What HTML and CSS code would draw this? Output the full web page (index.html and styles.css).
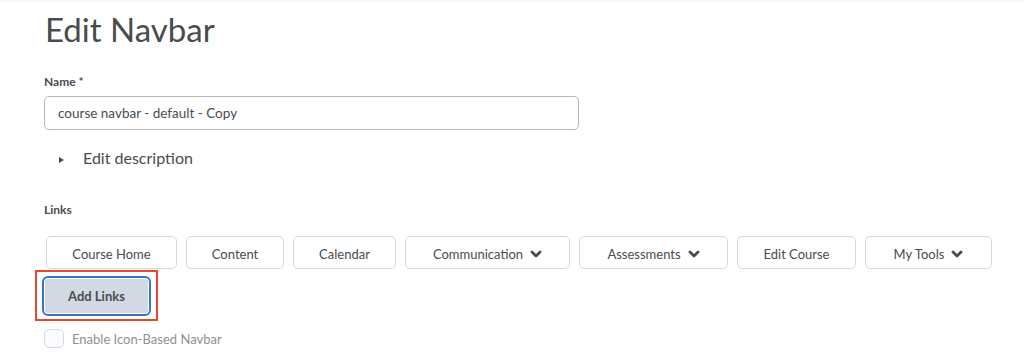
FILE: index.html
```html
<!DOCTYPE html>
<html lang="en">
<head>
    <meta charset="UTF-8">
    <title>Edit Navbar</title>
    <link rel="stylesheet" href="styles.css">
</head>
<body>
    <div class="topband"></div>
    <div class="page">
        <h1>Edit Navbar</h1>

        <label class="field-label" for="name">Name *</label>
        <input id="name" class="text-input" type="text" value="course navbar - default - Copy">

        <div class="desc-toggle">
            <span class="tri"></span>
            <span>Edit description</span>
        </div>

        <div class="field-label links-label">Links</div>

        <div class="links-row">
            <button class="link-btn w-home">Course Home</button>
            <button class="link-btn w-content">Content</button>
            <button class="link-btn w-cal">Calendar</button>
            <button class="link-btn w-comm">Communication <svg class="chev" viewBox="0 0 12 8"><path d="M2 2 6 6l4-4"/></svg></button>
            <button class="link-btn w-assess">Assessments <svg class="chev" viewBox="0 0 12 8"><path d="M2 2 6 6l4-4"/></svg></button>
            <button class="link-btn w-edit">Edit Course</button>
            <button class="link-btn w-tools">My Tools <svg class="chev" viewBox="0 0 12 8"><path d="M2 2 6 6l4-4"/></svg></button>
        </div>

        <div class="highlight">
            <button class="add-btn">Add Links</button>
        </div>

        <label class="check-row">
            <span class="checkbox"></span>
            <span>Enable Icon-Based Navbar</span>
        </label>
    </div>
</body>
</html>
```

FILE: styles.css
```css
body {
    margin: 0;
    background-color: #ffffff;
    font-family: Lato, "Open Sans", sans-serif;
    color: #494c4e;
}
.topband {
    height: 3px;
    background-color: #f9f9f9;
}
.page {
    padding-left: 44px;
}
h1 {
    margin: 6px 0 0 1px;
    font-size: 33px;
    font-weight: 400;
    line-height: 40px;
    color: #494c4e;
}
.field-label {
    display: block;
    margin-top: 24px;
    font-size: 12px;
    font-weight: 700;
    line-height: 18px;
}
.text-input {
    display: block;
    box-sizing: border-box;
    width: 535px;
    height: 34px;
    margin-top: 5px;
    padding: 0 13px;
    border: 1px solid #b3b6ba;
    border-radius: 5px;
    font-family: Lato, sans-serif;
    font-size: 13.5px;
    color: #494c4e;
}
.desc-toggle {
    display: flex;
    align-items: center;
    margin-top: 16px;
    height: 22px;
    font-size: 16px;
}
.tri {
    width: 0;
    height: 0;
    margin: 6px 19px 0 15px;
    border-top: 3.5px solid transparent;
    border-bottom: 3.5px solid transparent;
    border-left: 5px solid #494c4e;
}
.links-label {
    margin-top: 33px;
}
.links-row {
    display: flex;
    gap: 9px;
    margin-top: 17px;
    margin-left: 2px;
}
.link-btn {
    display: flex;
    align-items: center;
    justify-content: center;
    gap: 7px;
    box-sizing: border-box;
    height: 33px;
    padding: 2px 0 0;
    background-color: #ffffff;
    border: 1px solid #d3d9e3;
    border-radius: 5px;
    font-family: Lato, sans-serif;
    font-size: 13px;
    color: #494c4e;
}
.w-home { width: 131px; }
.w-content { width: 98px; }
.w-cal { width: 103px; }
.w-comm { width: 165px; }
.w-assess { width: 149px; }
.w-edit { width: 119px; }
.w-tools { width: 127px; }
.chev {
    width: 12px;
    height: 8px;
    fill: none;
    stroke: #494c4e;
    stroke-width: 2.8;
    stroke-linecap: round;
    stroke-linejoin: round;
}
.highlight {
    display: inline-block;
    margin: 1px 0 0 -9px;
    padding: 4px 5px 3px 5px;
    border: 2px solid #e8472d;
}
.add-btn {
    display: block;
    box-sizing: border-box;
    width: 109px;
    height: 40px;
    background-color: #d3d9e3;
    border: 2px solid #2f78c4;
    border-radius: 6px;
    box-shadow: inset 0 0 0 1px #ffffff;
    font-family: Lato, sans-serif;
    font-size: 13px;
    font-weight: 700;
    color: #494c4e;
}
.check-row {
    display: flex;
    align-items: center;
    gap: 8px;
    margin-top: 8px;
    font-size: 13px;
    color: #8e9194;
}
.checkbox {
    box-sizing: border-box;
    width: 20px;
    height: 19px;
    background-color: #f9fbff;
    border: 1px solid #d3d9e3;
    border-radius: 5px;
}
```
